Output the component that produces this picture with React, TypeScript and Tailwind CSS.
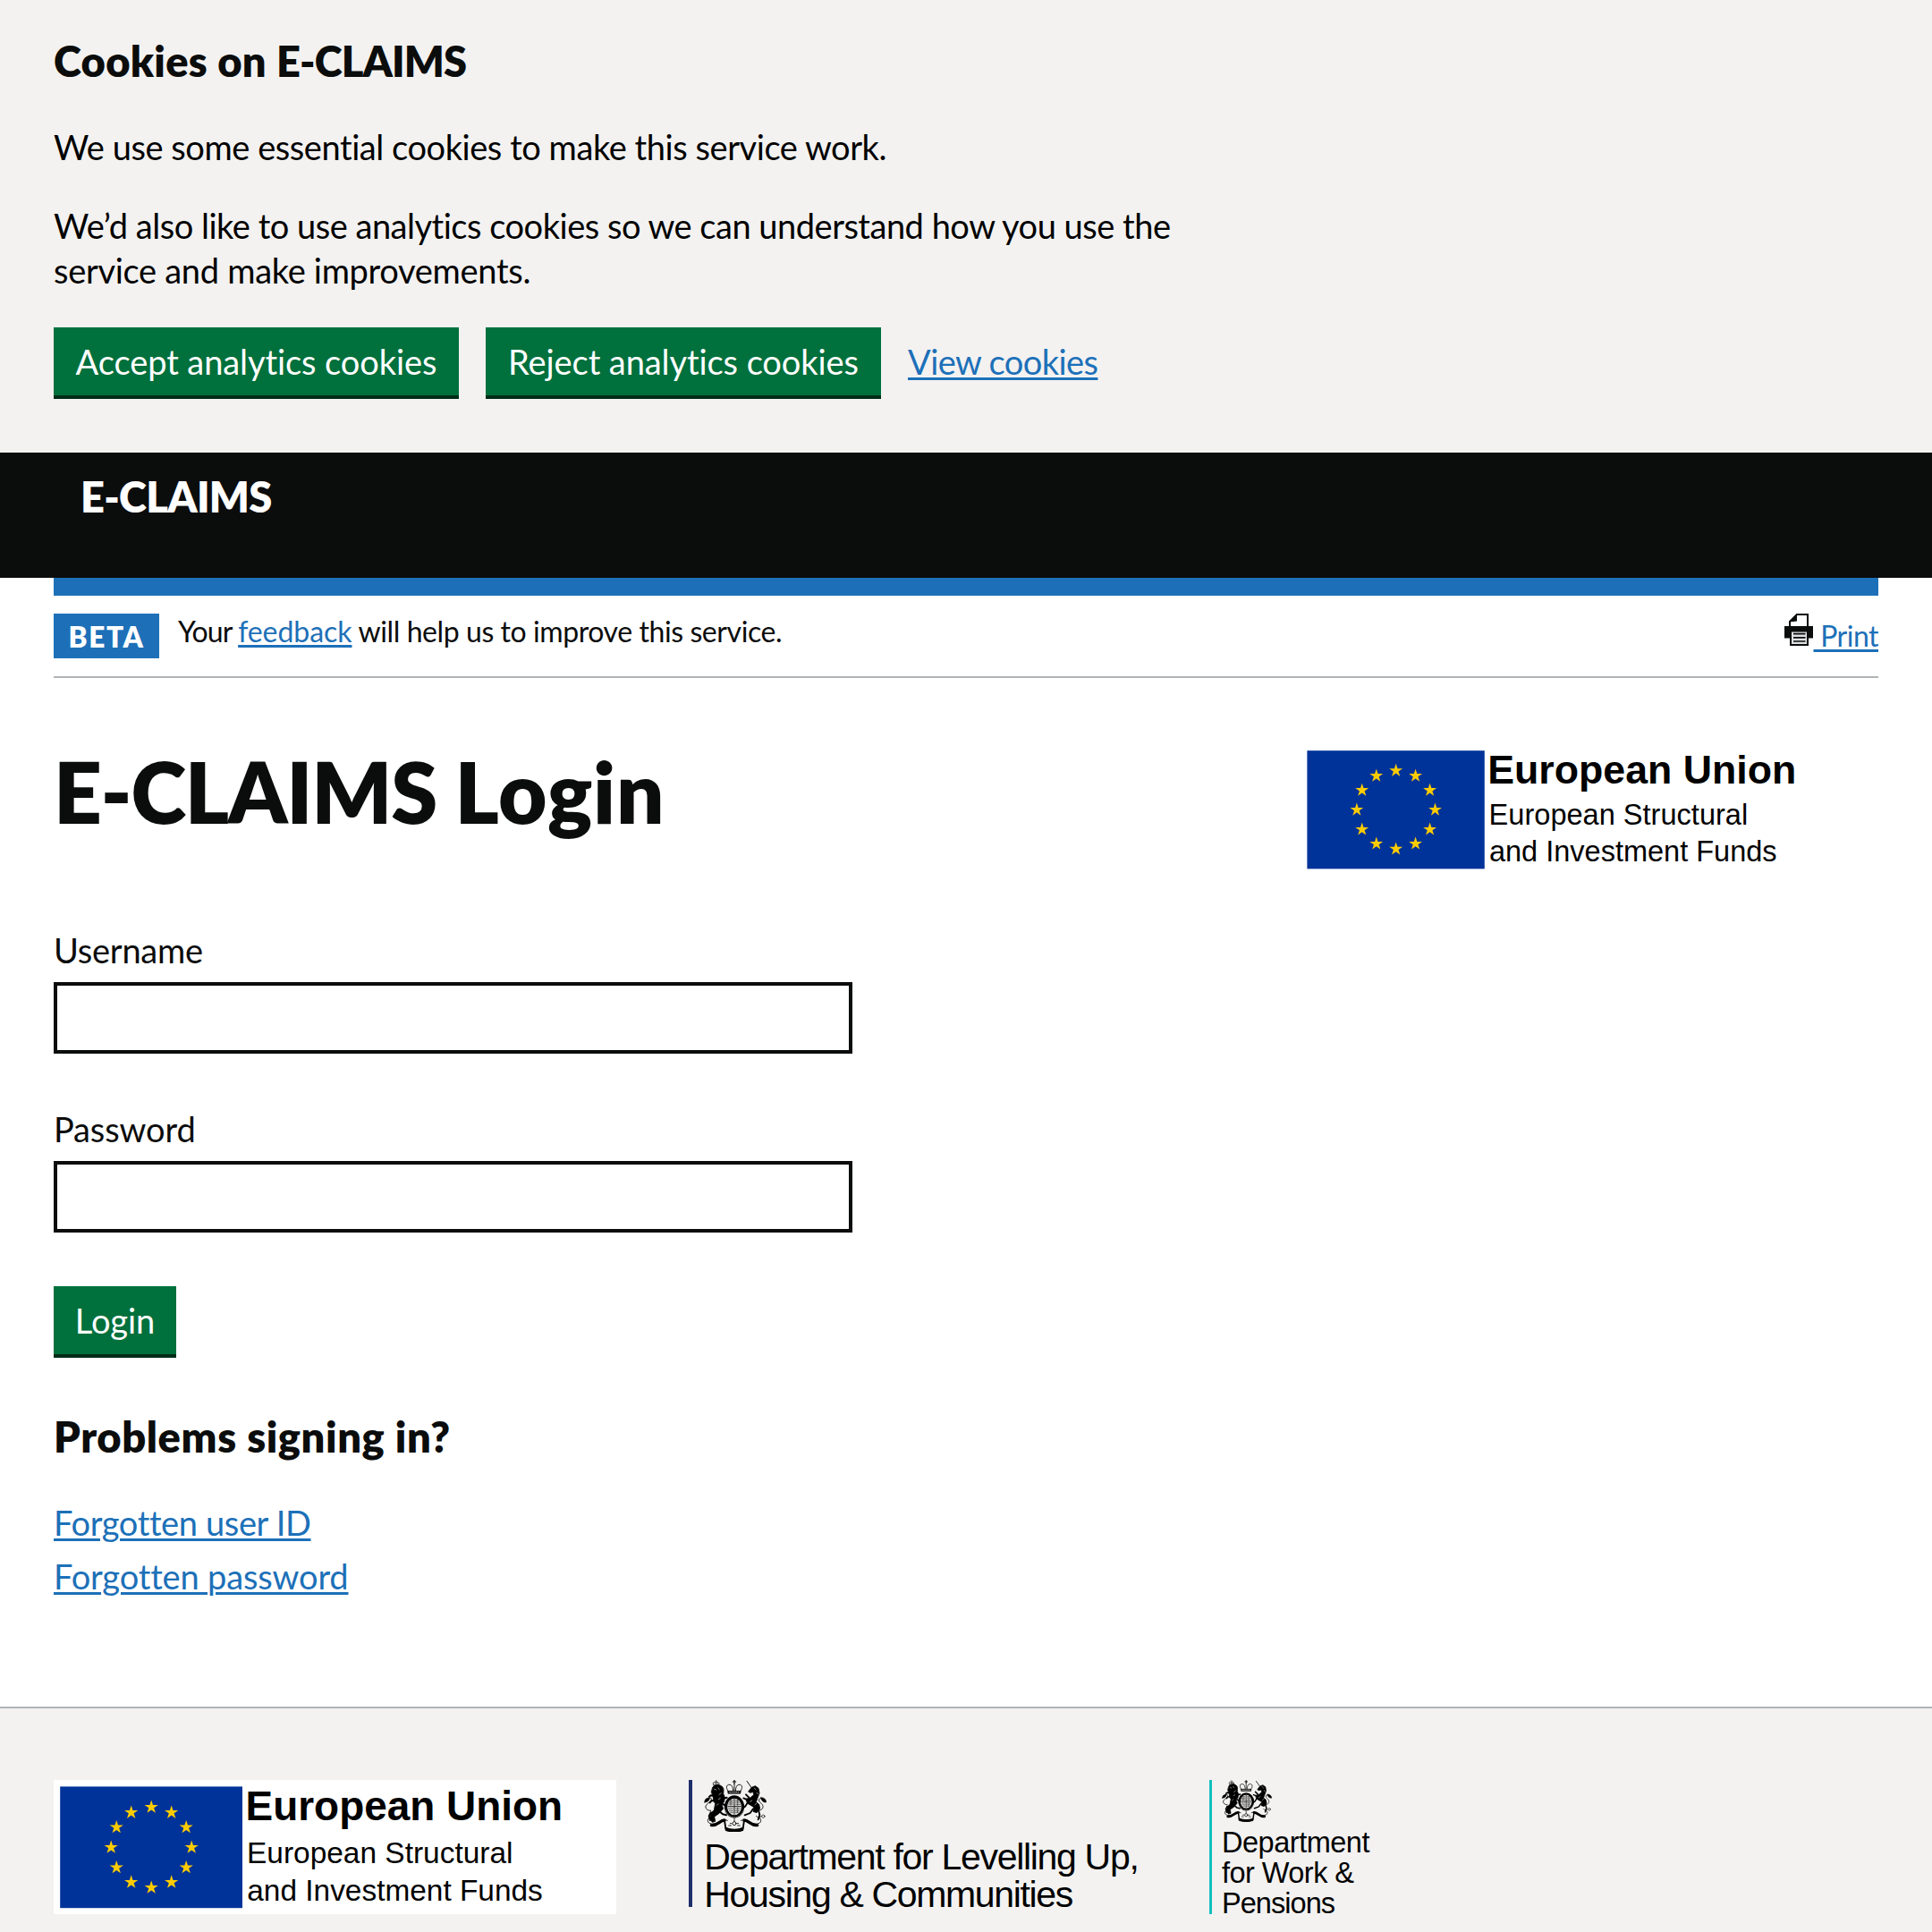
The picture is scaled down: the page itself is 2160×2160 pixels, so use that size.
import type { ReactNode } from "react";

const STARS = Array.from({ length: 12 }, (_, i) => i * 30);

function starPoints(cx: number, cy: number, r: number) {
  return Array.from({ length: 10 }, (_, i) => {
    const a = (Math.PI / 5) * i - Math.PI / 2;
    const d = i % 2 === 0 ? r : r * 0.382;
    return `${(cx + d * Math.cos(a)).toFixed(2)},${(cy + d * Math.sin(a)).toFixed(2)}`;
  }).join(" ");
}

function EuLogo({ className }: { className: string }) {
  return (
    <svg viewBox="0 0 629 150" className={className} fontFamily="'Liberation Sans', Arial, sans-serif">
      <rect width="629" height="150" fill="#fff" />
      <rect x="7.2" y="7.4" width="203.8" height="135.8" fill="#003399" />
      {STARS.map((deg) => {
        const a = (deg * Math.PI) / 180;
        return <polygon key={deg} fill="#ffcc00" points={starPoints(109.2 + 45 * Math.sin(a), 75.4 - 45 * Math.cos(a), 8)} />;
      })}
      <text x="214.6" y="45.2" fontSize="46.5" fontWeight="700" textLength="354.500" lengthAdjust="spacingAndGlyphs">European Union</text>
      <text x="216" y="92.8" fontSize="33.8" textLength="297.500" lengthAdjust="spacingAndGlyphs">European Structural</text>
      <text x="216.3" y="134.5" fontSize="33.8" textLength="330.500" lengthAdjust="spacingAndGlyphs">and Investment Funds</text>
    </svg>
  );
}

function Crest({ className }: { className: string }) {
  return (
    <svg viewBox="21 15 210 174" className={className} fill="none" stroke="#000" strokeLinecap="round" strokeLinejoin="round">
      {/* crown */}
      <path d="M123 16v12M118 21h10" strokeWidth="3.5" />
      <path d="M103 53C92 40 98 29 108 31c8 1 10 10 11 20M143 53c11-13 5-24-5-22-8 1-10 10-11 20M123 28v22" strokeWidth="2.6" />
      <path d="M101 52h44l-2 9h-40z" fill="#000" strokeWidth="1.5" />
      <path d="M107 56.500h32" stroke="#f3f2f1" strokeWidth="2.500" strokeDasharray="3 4" />
      {/* garter and shield */}
      <ellipse cx="123" cy="105" rx="28.500" ry="33" strokeWidth="10" />
      <ellipse cx="123" cy="104" rx="23" ry="27" fill="#d6d5d4" stroke="none" />
      <path d="M123 78v52M101 104h44" strokeWidth="2.500" />
      <path d="M105 90h13M104 96h14M107 84h11M128 84h9M128 90h13M128 97h14M104 111h14M106 118h12M110 124h8M128 111h13M128 118h11M128 124h8M111 82v18M134 82v18M134 108v17" strokeWidth="1.500" />
      <path d="M92 116l8 14 14 10h18l14-10 8-14" stroke="#f3f2f1" strokeWidth="1.500" strokeDasharray="3 4" />
      {/* lion */}
      <path d="M53 32c-5-9 4-12 8-9 5-3 14 0 10 9z" strokeWidth="2.400" />
      <path d="M62 17v5M58 27h9" strokeWidth="2.500" />
      <path d="M51 38c4-6 16-9 24-5 8 3 12 9 12 16l-1 12 5 12-2 14-8 12 5 12-15 17-15 10 3 16-10 3-8-12 4-20 10-9 4-22-5-6-2-14-3-10-3-8z" fill="#000" strokeWidth="2.500" />
      <path d="M58 68l-14-1-5 4M60 84l-14 1-5 6M70 118l14 12 12 3M44 124l-6 12 4 14" strokeWidth="6" />
      <path d="M84 78l14-4M84 96l8 4" strokeWidth="6" />
      <path d="M44 118c-10 0-18-6-17-14 1-10 21-16 19-25-1-6-10-6-14 0" strokeWidth="2.800" />
      <path d="M23 90c0-10 7-16 17-15 1 8-6 15-17 15z" fill="#000" strokeWidth="1.500" />
      <path d="M56 46l6 2M68 42l5 5M72 64l7-5M70 80l6-4M64 100l5-5" stroke="#f3f2f1" strokeWidth="1.800" />
      {/* unicorn */}
      <path d="M165 19l17 24" strokeWidth="2.800" />
      <path d="M172 51l9-11 12-5 11 8 3 16-5 14-6 16 10 8 3 14-11 14-12-4 3-14-9-6-14-8-4-14 14-4 12-10-2-10-9 3-6-3z" fill="#000" strokeWidth="2.500" />
      <path d="M168 82l-14-6M172 74l-10-10M166 94l-8 12M186 112l-10 14-18 7M204 116l4 16-5 16" strokeWidth="5.500" />
      <path d="M200 118c14 0 22-8 18-18-3-8-14-10-12-19 1-6 9-5 12 0" strokeWidth="2.600" />
      <path d="M212 74c10-1 18 6 18 16-10 1-17-6-18-16z" fill="#000" strokeWidth="1.500" />
      <path d="M190 42l5 6M198 58l5 4M176 88l6-4M192 98l5-4" stroke="#f3f2f1" strokeWidth="1.800" />
      <circle cx="220" cy="137" r="5" strokeWidth="2" />
      <path d="M196 136l8 5 10-4" strokeWidth="2.200" />
      {/* scroll */}
      <path d="M42 140c-8 2-11 14-4 19 8 6 24 4 34-2 10-7 18-10 28-6M204 140c8 2 11 14 4 19-8 6-24 4-34-2-10-7-18-10-28-6" strokeWidth="2.800" />
      <path d="M46 167c22 2 28-17 44-17M200 167c-22 2-28-17-44-17" strokeWidth="10" />
      <path d="M90 150l4 28c16 9 42 9 58 0l4-28" strokeWidth="5.500" />
      <path d="M94 175c16 8 42 8 58 0v9c-14 6-44 6-58 0z" fill="#000" strokeWidth="3.500" />
      <circle cx="123" cy="161" r="6" strokeWidth="2.500" />
      <path d="M123 146v8M114 161h-5M137 161h-5M104 168h8M134 168h8" strokeWidth="2.500" />
    </svg>
  );
}

function Printer() {
  return (
    <svg viewBox="0 0 32 36" className="h-9 w-8 shrink-0">
      <path d="M6 15V9l8-8h12v14" fill="#fff" stroke="#0b0c0c" strokeWidth="2" />
      <path d="M5 9.500L14 0v8.500z" fill="#0b0c0c" />
      <path d="M0 14h32v13.500H0z" fill="#0b0c0c" />
      <path d="M6 19h21v17H6z" fill="#0b0c0c" />
      <path d="M8 20.500h17v13.500H8z" fill="#dee0e2" />
      <path d="M10 22.700h13.500M10 26.900h13.500M10 31h13.500" stroke="#0b0c0c" strokeWidth="1.700" />
    </svg>
  );
}

function GreenButton({ children, className }: { children: ReactNode; className: string }) {
  return (
    <button className={`h-20 border-b-4 border-[#002d18] bg-[#00703c] pt-[17px] pb-[17px] text-center text-[38px] leading-[38px] tracking-[-0.08px] whitespace-nowrap text-white ${className}`}>
      {children}
    </button>
  );
}

function Link({ children, className }: { children: ReactNode; className: string }) {
  return (
    <a className={`text-[#1d70b8] underline decoration-[3px] underline-offset-[3px] ${className}`}>{children}</a>
  );
}

function Field({ label, id, type, className }: { label: string; id: string; type: string; className: string }) {
  return (
    <div className={className}>
      <label htmlFor={id} className="block text-[38px] leading-[50px]">{label}</label>
      <input id={id} type={type} className="mt-[11px] block h-20 w-[893px] border-4 border-[#0b0c0c] bg-white px-2" />
    </div>
  );
}

export default function App() {
  return (
    <div className="h-[2160px] w-[2160px] overflow-hidden bg-white font-[Lato,sans-serif] text-[#0b0c0c] [font-variant-ligatures:none]">
      <section className="h-[506px] bg-[#f3f2f1] px-[60px] pt-[38px]">
        <h2 className="text-[47px] leading-[60px] font-extrabold tracking-[0.3px]">
          Cookies on <span className="tracking-[-0.9px]">E-CLAIMS</span>
        </h2>
        <p className="mt-[41px] text-[38px] leading-[50px] tracking-[-0.44px] text-black">We use some essential cookies to make this service work.</p>
        <p className="mt-[38px] w-[1346px] text-[38px] leading-[50px] tracking-[-0.485px] text-black">
          We’d also like to use analytics cookies so we can understand how you use the <span className="tracking-[-0.3px]">service and make improvements.</span>
        </p>
        <div className="mt-[39px] flex items-start gap-[30px]">
          <GreenButton className="w-[453px]">Accept analytics cookies</GreenButton>
          <GreenButton className="w-[442px]">Reject analytics cookies</GreenButton>
          <Link className="pt-[17px] text-[38px] leading-[42px] tracking-[-0.58px]">View cookies</Link>
        </div>
      </section>

      <header className="h-[140px] bg-[#0b0c0c] pt-[19px] pl-[90px]">
        <span className="block text-[47px] leading-[60px] font-extrabold tracking-[-0.7px] text-white">E-CLAIMS</span>
      </header>

      <main className="px-[60px]">
        <div className="h-5 bg-[#1d70b8]" />
        <div className="flex items-start border-b-2 border-[#b1b4b6] py-5">
          <strong className="h-[50px] w-[118px] bg-[#1d70b8] text-center text-[31.5px] leading-[52px] font-extrabold tracking-[1.6px] text-white">BETA</strong>
          <p className="ml-[21px] pt-px text-[32px] leading-[38px] tracking-[-0.42px]">
            <span className="tracking-[-0.9px]">Your </span>
            <Link className="tracking-[-0.05px]">feedback</Link> will help us to improve this service.
          </p>
          <div className="ml-auto flex items-start">
            <Printer />
            <Link className="pt-px text-[32px] leading-[48px] tracking-[-0.5px] whitespace-pre"> Print</Link>
          </div>
        </div>

        <div className="mt-[74px] flex items-start justify-between">
          <h1 className="pt-[3px] text-[94px] leading-[100px] font-extrabold tracking-[0.8px]">
            <span className="tracking-[-1.3px]">E-CLAIMS </span>Login
          </h1>
          <EuLogo className="mr-[33px] h-[146px] w-[613px]" />
        </div>

        <form>
          <Field label="Username" id="username" type="text" className="mt-[59px] tracking-[-0.25px]" />
          <Field label="Password" id="password" type="password" className="mt-[59px] tracking-[-0.12px]" />
          <GreenButton className="mt-[60px] block w-[137px]">Login</GreenButton>
        </form>

        <h2 className="mt-[58px] text-[47px] leading-[60px] font-extrabold tracking-[0.6px]">Problems signing in?</h2>
        <ul className="mt-[41px] flex flex-col gap-[10px] text-[38px] leading-[50px]">
          <li><Link className="tracking-[-0.36px]">Forgotten user ID</Link></li>
          <li><Link className="tracking-[-0.15px]">Forgotten password</Link></li>
        </ul>
      </main>

      <footer className="mt-[121px] flex h-[252px] items-start border-t-2 border-[#b1b4b6] bg-[#f3f2f1] px-[60px] pt-20">
        <EuLogo className="h-[150px] w-[629px]" />
        <div className="ml-[81px] flex h-[142px] border-l-4 border-[#1f2f6b] pl-[13px]">
          <div className="w-[490px]">
            <Crest className="h-[58px] w-[70px]" />
            <svg viewBox="0 0 490 100" className="h-[100px] w-[490px] overflow-visible" fontFamily="'Liberation Sans', Arial, sans-serif" fontSize="41">
              <text x="0.3" y="41.700" textLength="486.500">Department for Levelling Up,</text>
              <text x="0.3" y="83.700" textLength="413">Housing &amp; Communities</text>
            </svg>
          </div>
        </div>
        <div className="ml-[75px] flex h-[150px] border-l-3 border-[#12bfbf] pl-[11px]">
          <div>
            <Crest className="h-[47px] w-[56px]" />
            <svg viewBox="0 0 170 110" className="h-[110px] w-[170px] overflow-visible" fontFamily="'Liberation Sans', Arial, sans-serif" fontSize="32.500">
              <text x="0" y="33.700" textLength="165.500">Department</text>
              <text x="0" y="68" textLength="148">for Work &amp;</text>
              <text x="0" y="102.300" textLength="127">Pensions</text>
            </svg>
          </div>
        </div>
      </footer>
    </div>
  );
}
